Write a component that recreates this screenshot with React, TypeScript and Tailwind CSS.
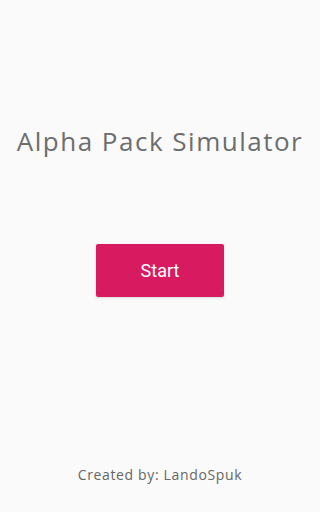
import React from 'react'

function App() {
  return (
    <div className="w-full h-[512px] bg-[#fafafa] flex flex-col items-center">
      <h1 className="mt-[124px] text-[26px] leading-[34px] text-[#6d6d6d] font-['Open_Sans',sans-serif] tracking-[1.5px]">
        Alpha Pack Simulator
      </h1>
      <button className="mt-[86px] w-[128px] h-[53px] bg-[#d81b60] text-white text-[18px] font-['Roboto',sans-serif] rounded-[2px] shadow-sm">
        Start
      </button>
      <div className="mt-auto mb-[28px] text-[14px] leading-[18px] text-[#666666] font-['Open_Sans',sans-serif] tracking-[0.65px]">
        Created by: LandoSpuk
      </div>
    </div>
  )
}

export default App
